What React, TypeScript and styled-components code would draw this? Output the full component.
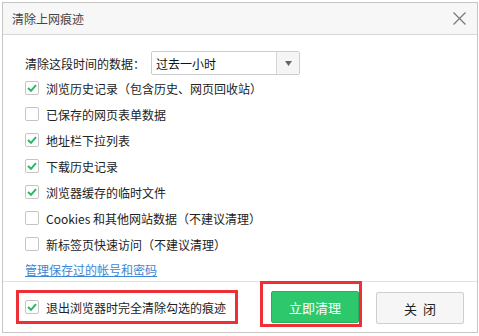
import React from "react";
import styled, { createGlobalStyle } from "styled-components";

const GlobalStyle = createGlobalStyle`
  * { box-sizing: border-box; }
  body {
    margin: 0;
    padding: 2px;
    background: #ffffff;
    font-family: "Noto Sans CJK SC", "Microsoft YaHei", sans-serif;
    font-size: 12px;
    color: #222222;
  }
`;

const Dialog = styled.div`
  width: 476px;
  height: 331px;
  border: 1px solid #c6c6c6;
  background: #ffffff;
  display: flex;
  flex-direction: column;
`;

const TitleBar = styled.div`
  height: 32px;
  flex-shrink: 0;
  background: #f7f7f7;
  border-bottom: 1px solid #d8d8d8;
  display: flex;
  align-items: center;
  justify-content: space-between;
  padding: 0 9px 0 9px;
  color: #444444;
`;

const CloseIcon = styled.button`
  width: 16px;
  height: 16px;
  padding: 0;
  border: none;
  background: none;
  display: flex;
  align-items: center;
  justify-content: center;
  margin-right: 1px;
`;

const Body = styled.div`
  padding: 16px 22px 0 22px;
`;

const RangeRow = styled.div`
  display: flex;
  align-items: center;
  height: 24px;
`;

const RangeLabel = styled.span`
  width: 126px;
  white-space: nowrap;
`;

const Select = styled.div`
  width: 149px;
  height: 24px;
  border: 1px solid #cccccc;
  border-radius: 2px;
  display: flex;
  background: #ffffff;
`;

const SelectValue = styled.div`
  flex: 1;
  padding-left: 4px;
  display: flex;
  align-items: center;
  color: #111111;
`;

const SelectArrow = styled.div`
  width: 23px;
  border-left: 1px solid #d6d6d6;
  background: #f5f5f5;
  display: flex;
  align-items: center;
  justify-content: center;
`;

const Option = styled.label`
  display: flex;
  align-items: center;
  height: 26px;
  gap: 7px;
  white-space: nowrap;
`;

const Box = styled.span`
  width: 14px;
  height: 14px;
  border: 1px solid #c4c4c4;
  border-radius: 2px;
  background: #ffffff;
  display: inline-flex;
  align-items: center;
  justify-content: center;
  flex-shrink: 0;
`;

const ManageLink = styled.a`
  display: inline-block;
  margin-top: 3px;
  line-height: 20px;
  color: #3b86d6;
  text-decoration: underline;
  cursor: pointer;
`;

const Footer = styled.div`
  flex: 1;
  margin-top: 1px;
  border-top: 1px solid #e2e2e2;
  display: flex;
  align-items: flex-start;
  padding: 0 13px 0 13px;
`;

const Highlight = styled.div<{ $pad: string; $mt: number }>`
  border: 3px solid #ee3036;
  padding: ${(p) => p.$pad};
  margin-top: ${(p) => p.$mt}px;
  display: flex;
  align-items: center;
`;

const KeepOption = styled(Option)`
  height: 28px;
  width: 210px;
`;

const Button = styled.button<{ $primary?: boolean }>`
  width: 88px;
  height: 32px;
  border-radius: 2px;
  font-family: inherit;
  font-size: 13px;
  cursor: pointer;
  border: 1px solid ${(p) => (p.$primary ? "#25b163" : "#cfcfcf")};
  background: ${(p) => (p.$primary ? "#2ec86c" : "#f6f6f6")};
  color: ${(p) => (p.$primary ? "#ffffff" : "#222222")};
`;

const CloseButton = styled(Button)`
  margin-top: 10px;
  margin-left: 14px;
  letter-spacing: 6px;
  text-indent: 6px;
`;

function Check({ on }: { on: boolean }) {
  return (
    <Box>
      {on && (
        <svg width="10" height="8" viewBox="0 0 10 8">
          <polyline
            points="1,4 4,6.8 9,1.2"
            fill="none"
            stroke="#27b862"
            strokeWidth="2"
          />
        </svg>
      )}
    </Box>
  );
}

const options: [string, boolean][] = [
  ["浏览历史记录（包含历史、网页回收站）", true],
  ["已保存的网页表单数据", false],
  ["地址栏下拉列表", true],
  ["下载历史记录", true],
  ["浏览器缓存的临时文件", true],
  ["Cookies 和其他网站数据（不建议清理）", false],
  ["新标签页快速访问（不建议清理）", false],
];

export default function App() {
  return (
    <>
      <GlobalStyle />
      <Dialog>
        <TitleBar>
          <span>清除上网痕迹</span>
          <CloseIcon>
            <svg width="13" height="13" viewBox="0 0 13 13">
              <path d="M0.5 0.5 L12.5 12.5 M12.5 0.5 L0.5 12.5" stroke="#777" strokeWidth="1.2" />
            </svg>
          </CloseIcon>
        </TitleBar>
        <Body>
          <RangeRow>
            <RangeLabel>清除这段时间的数据：</RangeLabel>
            <Select>
              <SelectValue>过去一小时</SelectValue>
              <SelectArrow>
                <svg width="7" height="5" viewBox="0 0 7 5">
                  <path d="M0 0 H7 L3.5 5 Z" fill="#666" />
                </svg>
              </SelectArrow>
            </Select>
          </RangeRow>
          {options.map(([label, on]) => (
            <Option key={label}>
              <Check on={on} />
              <span>{label}</span>
            </Option>
          ))}
          <ManageLink>管理保存过的帐号和密码</ManageLink>
        </Body>
        <Footer>
          <Highlight $pad="0 0 0 6px" $mt={8}>
            <KeepOption>
              <Check on />
              <span>退出浏览器时完全清除勾选的痕迹</span>
            </KeepOption>
          </Highlight>
          <Highlight $pad="7px 0 1px 8px" $mt={-1} style={{ marginLeft: "auto" }}>
            <Button $primary>立即清理</Button>
          </Highlight>
          <CloseButton>关闭</CloseButton>
        </Footer>
      </Dialog>
    </>
  );
}
